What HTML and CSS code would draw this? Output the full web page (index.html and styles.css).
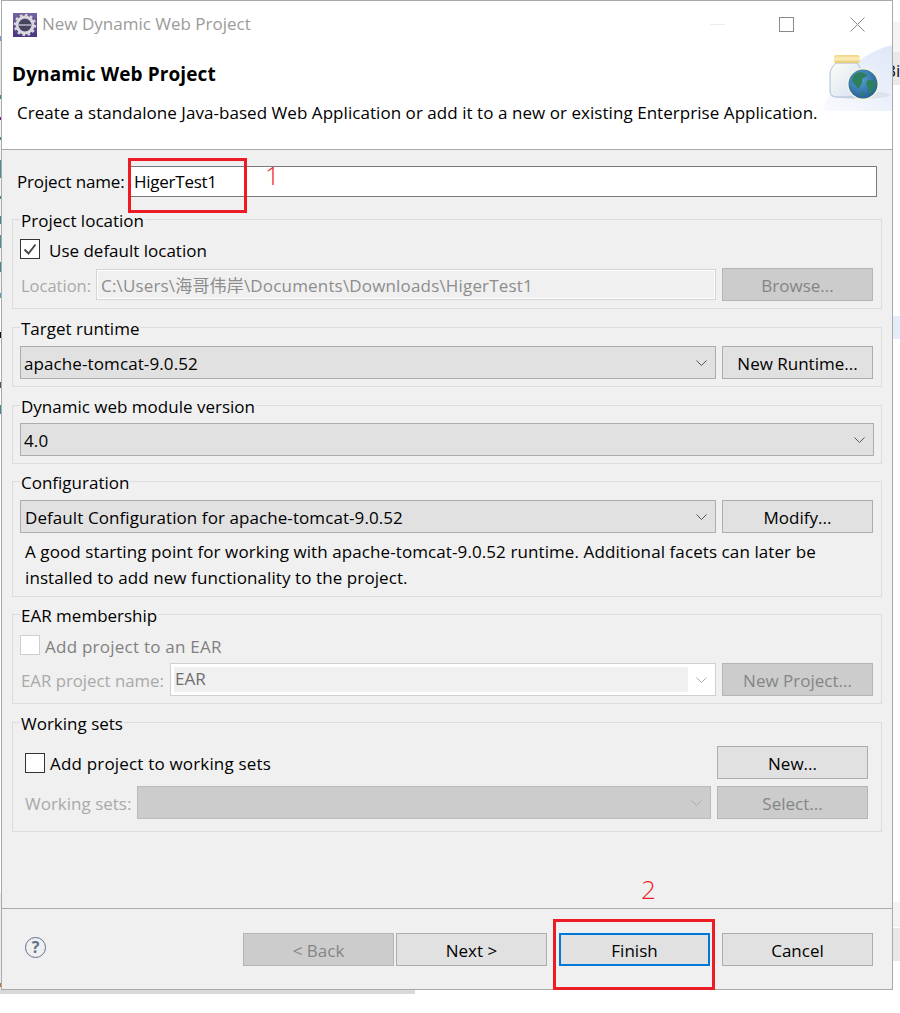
FILE: index.html
```html
<!DOCTYPE html>
<html lang="en">
<head>
<meta charset="utf-8">
<title>New Dynamic Web Project</title>
<link rel="stylesheet" href="styles.css">
</head>
<body>
<div class="page">
  <div class="edge-ticks"></div>
  <div class="bg-right bg-r1"></div>
  <div class="bg-right bg-r2"><span>Bi</span></div>
  <div class="bg-right bg-r3"></div>
  <div class="bg-right bg-r4"></div>
  <div class="bg-right bg-r5"></div>
  <div class="bg-bottom"></div>

  <div class="window">
    <div class="head">
      <div class="titlebar">
        <svg class="app-icon" viewBox="0 0 24 24">
          <defs>
            <linearGradient id="pp" x1="0" y1="0" x2="0" y2="1"><stop offset="0" stop-color="#75659f"/><stop offset="1" stop-color="#4a3580"/></linearGradient>
          </defs>
          <rect width="24" height="24" fill="url(#pp)"/>
          <circle cx="12" cy="12" r="8" fill="none" stroke="#d8d8dc" stroke-width="3"/>
          <circle cx="12" cy="12" r="10" fill="none" stroke="#d8d8dc" stroke-width="2.4" stroke-dasharray="2.6 2.6"/>
          <circle cx="12" cy="12" r="6" fill="#45455a"/>
          <rect x="6" y="11" width="12" height="2" fill="#9a9ab0"/>
        </svg>
        <span class="title">New Dynamic Web Project</span>
        <div class="controls">
          <span class="ctl-min"></span>
          <span class="ctl-max"></span>
          <svg class="ctl-close" viewBox="0 0 15 15"><path d="M0.5 0.5L14.5 14.5M14.5 0.5L0.5 14.5" stroke="#8a8a8a" stroke-width="1" fill="none"/></svg>
        </div>
      </div>
      <div class="head-title">Dynamic Web Project</div>
      <div class="head-desc">Create a standalone Java-based Web Application or add it to a new or existing Enterprise Application.</div>
      <svg class="banner" viewBox="0 0 70 66">
        <defs>
          <linearGradient id="swoosh" x1="0" y1="1" x2="1" y2="0"><stop offset="0" stop-color="#fafbfe"/><stop offset="1" stop-color="#dfe7f8"/></linearGradient>
          <linearGradient id="lid" x1="0" y1="0" x2="0" y2="1"><stop offset="0" stop-color="#f0d480"/><stop offset="0.5" stop-color="#fbf0c0"/><stop offset="1" stop-color="#e5c464"/></linearGradient>
          <linearGradient id="jar" x1="0" y1="0" x2="1" y2="1"><stop offset="0" stop-color="#fcfdf6"/><stop offset="1" stop-color="#d4e0f2"/></linearGradient>
          <radialGradient id="globe" cx="0.4" cy="0.35" r="0.75"><stop offset="0" stop-color="#5aa0d0"/><stop offset="1" stop-color="#1f5a92"/></radialGradient>
        </defs>
        <path d="M0 66C14 32 38 8 70 0V66Z" fill="url(#swoosh)"/>
        <ellipse cx="38" cy="50" rx="30" ry="4" fill="#d6d9e2" opacity="0.6"/>
        <path d="M14 18C10 22 8 25 8 30V46C8 50 11 52 15 52H33C37 52 40 50 40 46V30C40 25 38 22 35 18Z" fill="url(#jar)" stroke="#a8bcd8" stroke-width="1"/>
        <rect x="12" y="10" width="26" height="8" rx="2.5" fill="url(#lid)"/>
        <circle cx="41" cy="39" r="16" fill="#f7f5d8"/>
        <circle cx="41" cy="39" r="14.5" fill="url(#globe)"/>
        <path d="M33 29C37 26 43 27 45 30C44 33 41 32 40 35C41 38 38 40 37 44C34 42 32 38 30 36C30 33 31 31 33 29ZM45 36C48 34 52 35 54 38C53 43 51 46 48 49C46 47 47 44 46 42C44 40 44 38 45 36ZM39 47L43 48L41 52Z" fill="#2d7f5e"/>
      </svg>
    </div>

    <div class="body">
      <div class="name-row">
        <label class="name-label">Project name:</label>
        <div class="name-input">HigerTest1</div>
      </div>

      <section class="group g1">
        <div class="legend">Project location</div>
        <div class="check-row r-first">
          <span class="check">
            <svg viewBox="0 0 18 18"><path d="M3.5 9.5L7.5 13.5L14.5 4.5" stroke="#4a4a4a" stroke-width="2" fill="none"/></svg>
          </span>
          <span class="check-text">Use default location</span>
        </div>
        <div class="row r-next">
          <span class="lbl-dis lbl-loc">Location:</span>
          <div class="path-input">C:\Users\海哥伟岸\Documents\Downloads\HigerTest1</div>
          <button class="btn btn-dis">Browse...</button>
        </div>
      </section>

      <section class="group g2">
        <div class="legend">Target runtime</div>
        <div class="row">
          <div class="select">
            <span class="select-text">apache-tomcat-9.0.52</span>
            <svg class="chev" viewBox="0 0 11 6"><path d="M0.5 0.5L5.5 5.5L10.5 0.5" stroke="#555" fill="none"/></svg>
          </div>
          <button class="btn">New Runtime...</button>
        </div>
      </section>

      <section class="group g3">
        <div class="legend">Dynamic web module version</div>
        <div class="row">
          <div class="select select-wide">
            <span class="select-text">4.0</span>
            <svg class="chev" viewBox="0 0 11 6"><path d="M0.5 0.5L5.5 5.5L10.5 0.5" stroke="#555" fill="none"/></svg>
          </div>
        </div>
      </section>

      <section class="group g4">
        <div class="legend">Configuration</div>
        <div class="row">
          <div class="select">
            <span class="select-text">Default Configuration for apache-tomcat-9.0.52</span>
            <svg class="chev" viewBox="0 0 11 6"><path d="M0.5 0.5L5.5 5.5L10.5 0.5" stroke="#555" fill="none"/></svg>
          </div>
          <button class="btn">Modify...</button>
        </div>
        <p class="config-desc">A good starting point for working with apache-tomcat-9.0.52 runtime. Additional facets can later be<br>installed to add new functionality to the project.</p>
      </section>

      <section class="group g5">
        <div class="legend">EAR membership</div>
        <div class="check-row r-ear">
          <span class="check check-dis"></span>
          <span class="check-text text-dis">Add project to an EAR</span>
        </div>
        <div class="row r-next">
          <span class="lbl-dis lbl-ear">EAR project name:</span>
          <div class="ear-select">
            <span class="ear-fill">EAR</span>
            <svg class="chev chev-dis" viewBox="0 0 11 6"><path d="M0.5 0.5L5.5 5.5L10.5 0.5" stroke="#aaa" fill="none"/></svg>
          </div>
          <button class="btn btn-dis">New Project...</button>
        </div>
      </section>

      <section class="group g6">
        <div class="legend">Working sets</div>
        <div class="row r-ws">
          <div class="check-row ws-check">
            <span class="check"></span>
            <span class="check-text">Add project to working sets</span>
          </div>
          <button class="btn">New...</button>
        </div>
        <div class="row r-next-ws">
          <span class="lbl-dis lbl-ws">Working sets:</span>
          <div class="ws-select">
            <svg class="chev chev-dis" viewBox="0 0 11 6"><path d="M0.5 0.5L5.5 5.5L10.5 0.5" stroke="#aaa" fill="none"/></svg>
          </div>
          <button class="btn btn-dis">Select...</button>
        </div>
      </section>
    </div>

    <div class="footer">
      <span class="help">?</span>
      <div class="footer-btns">
        <button class="btn btn-dis">&lt; Back</button>
        <button class="btn btn-next">Next &gt;</button>
        <button class="btn btn-finish">Finish</button>
        <button class="btn btn-cancel">Cancel</button>
      </div>
    </div>
  </div>

  <div class="mark mark-1"></div>
  <div class="mark mark-2"></div>
  <span class="num num-1">1</span>
  <span class="num num-2">2</span>
</div>
</body>
</html>
```

FILE: styles.css
```css
* { box-sizing: border-box; }
html, body { margin: 0; padding: 0; background: #fff; }
body { font-family: "Open Sans", "Noto Sans CJK SC", sans-serif; font-size: 17px; color: #000; }
.page { position: relative; width: 900px; height: 1013px; overflow: hidden; background: #fff; }

.edge-ticks {
  position: absolute; left: 0; top: 0; width: 1px; height: 990px;
  background: linear-gradient(to bottom,
    #fff 0, #fff 36px, #6f9bc9 36px, #6f9bc9 41px, #e8e8e8 41px, #e8e8e8 95px,
    #3f8a93 95px, #3f8a93 99px, #f4f4f4 99px, #f4f4f4 117px,
    #8b1a89 117px, #8b1a89 120px, #f4f4f4 120px, #f4f4f4 137px,
    #3f8a93 137px, #3f8a93 140px, #f4f4f4 140px, #f4f4f4 160px,
    #4f8c93 160px, #4f8c93 178px, #f4f4f4 178px, #f4f4f4 196px,
    #3f8a93 196px, #3f8a93 199px, #f4f4f4 199px, #f4f4f4 216px,
    #3f8a93 216px, #3f8a93 224px, #f4f4f4 224px, #f4f4f4 235px,
    #4f8c93 235px, #4f8c93 248px, #f4f4f4 248px, #f4f4f4 262px,
    #3f8a93 262px, #3f8a93 272px, #f4f4f4 272px, #f4f4f4 293px,
    #5b9fc0 293px, #5b9fc0 298px, #fff 298px, #fff 332px,
    #111 332px, #111 338px, #fff 338px, #fff 382px,
    #555 382px, #555 388px, #fff 388px, #fff 405px,
    #3f8a93 405px, #3f8a93 414px, #fff 414px, #fff 893px,
    #ececec 893px, #ececec 983px, #b87a20 983px, #b87a20 987px, #ececec 987px);
}
.bg-right { position: absolute; left: 893px; width: 7px; }
.bg-r1 { top: 22px; height: 30px; background: #f4f4f4; }
.bg-r2 { top: 52px; height: 33px; background: #e9e9e9; overflow: hidden; }
.bg-r2 span { display: block; margin-left: -8px; line-height: 38px; font-size: 17px; color: #111; white-space: nowrap; }
.bg-r3 { top: 316px; height: 23px; background: #e4eefb; }
.bg-r4 { top: 902px; height: 25px; background: #f3f3f3; }
.bg-r5 { top: 928px; height: 33px; background: #e8e8e8; }
.bg-bottom { position: absolute; left: 0; top: 990px; width: 415px; height: 4px; background: #d9d9d9; }

.window {
  position: absolute; left: 1px; top: 0; width: 892px; height: 990px;
  display: flex; flex-direction: column;
  background: #f0f0f0; border: 1px solid #aaa;
}

.head { position: relative; height: 149px; background: #fff; border-bottom: 1px solid #aaa; flex: none; }
.titlebar { display: flex; align-items: center; height: 47px; padding-left: 11px; }
.app-icon { width: 24px; height: 24px; flex: none; margin-top: 1px; }
.title { margin: -2px 0 0 5px; color: #9b9b9b; font-size: 17px; }
.controls { position: relative; margin-left: auto; display: flex; align-items: center; padding-right: 27px; }
.ctl-min { width: 15px; height: 1px; background: #ececec; }
.ctl-max { width: 15px; height: 15px; margin-left: 54px; border: 1px solid #8a8a8a; }
.ctl-close { width: 15px; height: 15px; margin-left: 56px; }
.head-title { margin: 13px 0 0 10px; font-weight: 700; font-size: 19px; letter-spacing: 0.1px; line-height: 26px; }
.head-desc { margin: 13px 0 0 15px; line-height: 26px; letter-spacing: 0.05px; white-space: nowrap; }
.banner { position: absolute; right: 0; top: 44px; width: 70px; height: 66px; }

.body { flex: 1; padding-top: 16px; border-bottom: 1px solid #aaa; }
.name-row { display: flex; align-items: center; height: 31px; padding-left: 15px; }
.name-label { width: 111px; flex: none; white-space: nowrap; letter-spacing: -0.15px; }
.name-input { width: 749px; height: 31px; padding-left: 5px; line-height: 30px; letter-spacing: -0.25px; background: #fff; border: 1px solid #7a7a7a; }

.group { margin: 0 10px; border: 1px solid #dcdcdc; padding: 0 8px 7px 7px; }
.g1 { margin-top: 22px; }
.g2, .g3 { margin-top: 18px; }
.g4, .g5 { margin-top: 17px; }
.g4 { padding-bottom: 5px; }
.g6 { margin-top: 18px; padding: 0 13px 12px 12px; }
.legend {
  width: fit-content; margin: -10px 0 0 0; padding: 0 1px;
  height: 20px; line-height: 22px; background: #f0f0f0; white-space: nowrap;
}
.g6 .legend { margin-left: -5px; }

.row { display: flex; align-items: center; height: 33px; margin-top: 8px; }
.g3 .row { margin-top: 7px; }
.g1 .r-next { margin-top: 9px; }
.g5 .r-next { margin-top: 8px; }
.r-ws { margin-top: 13px; justify-content: space-between; }
.r-next-ws { margin-top: 7px; }

.check-row { display: flex; align-items: center; height: 20px; }
.r-first { margin-top: 9px; }
.r-ear { margin-top: 10px; }
.check { display: block; width: 20px; height: 20px; flex: none; background: #fff; border: 1px solid #333; }
.check svg { display: block; width: 18px; height: 18px; }
.check-dis { border-color: #cfcfcf; }
.check-text { margin-left: 9px; padding-top: 2px; white-space: nowrap; }
.r-ear .check-text { margin-left: 5px; letter-spacing: 0.24px; }
.ws-check .check-text { margin-left: 5px; letter-spacing: 0.18px; }
.text-dis { color: #808080; }

.lbl-dis { color: #a9a9a9; white-space: nowrap; flex: none; padding-top: 2px; }
.lbl-loc { width: 76px; padding-left: 1px; font-size: 16.5px; }
.lbl-ear { width: 150px; padding-left: 1px; font-size: 16.8px; }
.lbl-ws { width: 112px; }

.path-input {
  flex: none; width: 620px; height: 31px; margin-right: 6px; padding-left: 4px;
  line-height: 31px; letter-spacing: 0.17px; color: #8d8d8d; background: #f0f0f0;
  border: 1px solid #d4d4d4; box-shadow: inset 0 0 0 1px #fff; white-space: nowrap;
}

.btn {
  flex: none; width: 151px; height: 33px; padding: 2px 0 0; font: inherit; color: #000;
  background: #e1e1e1; border: 1px solid #adadad; border-radius: 0;
}
.btn-dis { color: #858585; background: #ccc; border-color: #b5b5b5; }

.select {
  flex: none; display: flex; align-items: center; justify-content: space-between;
  width: 696px; height: 33px; margin-right: 6px; padding: 0 8px 0 3px;
  background: #e1e1e1; border: 1px solid #adadad; white-space: nowrap;
}
.select-wide { width: 854px; margin-right: 0; }
.select-text { padding-top: 2px; letter-spacing: 0.1px; }
.g4 .select-text { padding-left: 1px; letter-spacing: 0.08px; }
.chev { display: block; width: 11px; height: 6px; flex: none; }

.config-desc { margin: 6px 0 0 5px; line-height: 26px; letter-spacing: 0.09px; white-space: nowrap; }

.ear-select {
  flex: none; display: flex; align-items: center; justify-content: space-between;
  width: 546px; height: 33px; margin-right: 6px; padding: 3px 8px 3px 3px;
  background: #fff; border: 1px solid #d0d0d0;
}
.ear-fill { flex: none; width: 514px; height: 100%; padding-left: 1px; line-height: 24px; color: #6e6e6e; background: #f0f0f0; }

.ws-select {
  flex: none; display: flex; align-items: center; justify-content: flex-end;
  width: 574px; height: 33px; margin-right: 6px; padding-right: 8px;
  background: #ccc; border: 1px solid #bcbcbc;
}

.footer { flex: none; display: flex; align-items: flex-start; height: 80px; padding: 24px 19px 0 23px; }
.help {
  display: block; width: 21px; height: 21px; margin-top: 4px; flex: none; border-radius: 50%;
  border: 1px solid #5f7391; color: #5f7391; text-align: center; font-weight: 700; font-size: 16px; line-height: 19px;
}
.footer-btns { display: flex; margin-left: auto; }
.btn-next { margin-left: 2px; }
.btn-finish { margin-left: 12px; border: 2px solid #0078d7; }
.btn-cancel { margin-left: 12px; }

.mark { position: absolute; border: 3px solid #ed1c24; }
.mark-1 { left: 128px; top: 158px; width: 119px; height: 55px; }
.mark-2 { left: 553px; top: 919px; width: 162px; height: 71px; }
.num { position: absolute; color: #ed1c24; font-size: 26px; font-weight: 300; line-height: 30px; }
.num-1 { left: 265px; top: 160px; }
.num-2 { left: 641px; top: 874px; }
```
